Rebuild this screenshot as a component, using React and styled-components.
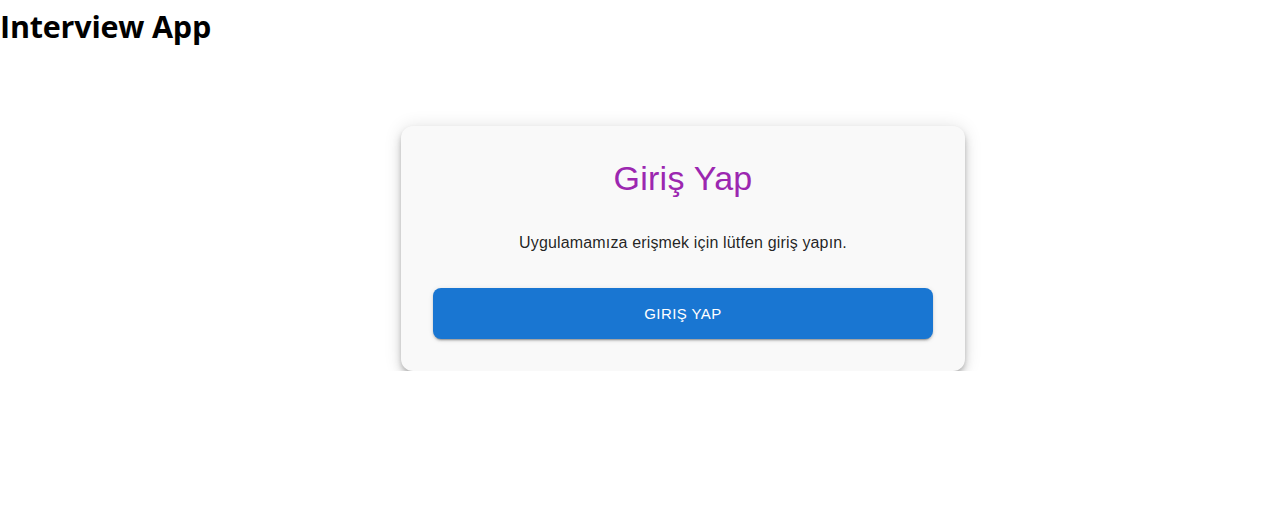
import styled, { createGlobalStyle } from 'styled-components';

const GlobalStyle = createGlobalStyle`
    body {
        margin: 0;
        background: #ffffff;
        font-family: 'Liberation Sans', Arial, sans-serif;
    }
`;

const Header = styled.h1`
    margin: 0;
    font-family: 'Open Sans', 'Noto Sans', sans-serif;
    font-weight: 700;
    font-size: 30.5px;
    line-height: 53px;
    color: #000;
    letter-spacing: -0.2px;
`;

const Main = styled.main`
    display: flex;
    justify-content: center;
    padding-top: 73px;
    padding-left: 80px;
`;

const Card = styled.div`
    width: 564px;
    box-sizing: border-box;
    padding: 32px;
    background: #f9f9f9;
    border-radius: 12px;
    box-shadow: 0px 3px 5px -1px rgba(0, 0, 0, 0.2),
        0px 6px 10px 0px rgba(0, 0, 0, 0.14),
        0px 1px 18px 0px rgba(0, 0, 0, 0.12);
    display: flex;
    flex-direction: column;
    align-items: center;
    text-align: center;
`;

const Title = styled.h4`
    margin: 0 0 31px;
    font-size: 34px;
    font-weight: 400;
    line-height: 1.235;
    letter-spacing: 0.25px;
    color: #9c27b0;
`;

const Subtitle = styled.p`
    margin: 0 0 33px;
    font-size: 16px;
    line-height: 1.5;
    letter-spacing: 0.15px;
    color: rgba(0, 0, 0, 0.87);
`;

const Button = styled.button`
    width: 100%;
    height: 51px;
    border: none;
    border-radius: 8px;
    background: #1976d2;
    color: #fff;
    font-family: 'Liberation Sans', Arial, sans-serif;
    font-size: 15px;
    font-weight: 500;
    text-transform: uppercase;
    letter-spacing: 0.43px;
    cursor: pointer;
    box-shadow: 0px 3px 1px -2px rgba(0, 0, 0, 0.2),
        0px 2px 2px 0px rgba(0, 0, 0, 0.14),
        0px 1px 5px 0px rgba(0, 0, 0, 0.12);
    :hover {
        background: #1565c0;
    }
`;

export default function App() {
    return (
        <>
            <GlobalStyle />
            <Header>Interview App</Header>
            <Main>
                <Card>
                    <Title>Giriş Yap</Title>
                    <Subtitle>Uygulamamıza erişmek için lütfen giriş yapın.</Subtitle>
                    <Button>GIRIŞ YAP</Button>
                </Card>
            </Main>
        </>
    );
}
